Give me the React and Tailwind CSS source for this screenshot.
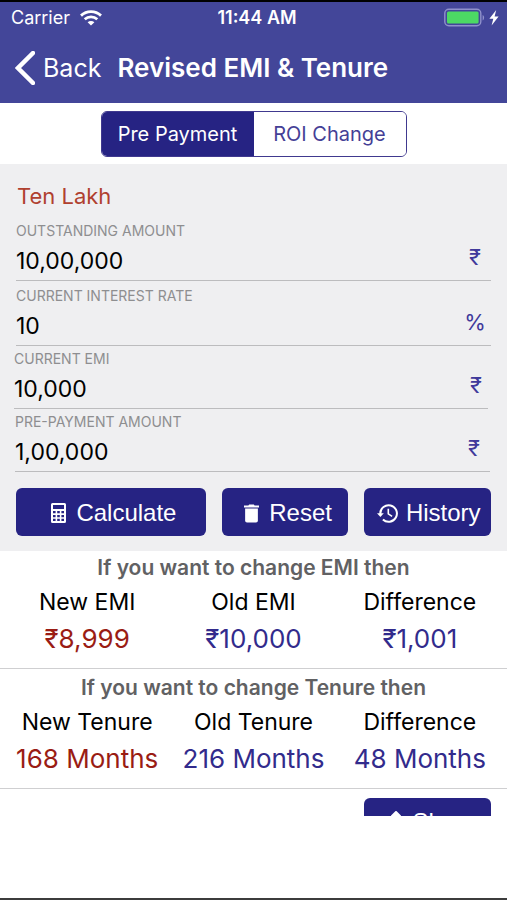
import React, { useState } from 'react';

const fields = [
  { id: 'outstanding', label: 'OUTSTANDING AMOUNT', value: '10,00,000', unit: '₹', box: 'ml-4 mr-4 h-[65px] pt-[5px]', unitBox: 'w-8' },
  { id: 'rate', label: 'CURRENT INTEREST RATE', value: '10', unit: '%', box: 'ml-4 mr-4 h-[65px] pt-[5px]', unitBox: 'w-8' },
  { id: 'emi', label: 'CURRENT EMI', value: '10,000', unit: '₹', box: 'ml-3.5 mr-[19px] h-[63px] pt-[3px]', unitBox: 'w-6' },
  { id: 'prepayment', label: 'PRE-PAYMENT AMOUNT', value: '1,00,000', unit: '₹', box: 'ml-[15px] mr-[17px] h-[63px] pt-[3px]', unitBox: 'w-8' },
];

const results = [
  {
    title: 'If you want to change EMI then',
    box: 'h-[118px] pt-[5px]',
    items: [
      { label: 'New EMI', value: '₹8,999' },
      { label: 'Old EMI', value: '₹10,000' },
      { label: 'Difference', value: '₹1,001' },
    ],
  },
  {
    title: 'If you want to change Tenure then',
    box: 'h-[120px] pt-[7px]',
    items: [
      { label: 'New Tenure', value: '168 Months' },
      { label: 'Old Tenure', value: '216 Months' },
      { label: 'Difference', value: '48 Months' },
    ],
  },
];

function WifiIcon() {
  return (
    <svg className="w-[22px] h-4" viewBox="0 0 22 16" fill="none" stroke="currentColor" strokeWidth="2.8">
      <path d="M1 5.6C6.6.4 15.4.4 21 5.6" />
      <path d="M4.7 9.3c3.6-3.3 9-3.3 12.6 0" />
      <path d="M11 15.6 7.6 12.2c1.9-1.7 4.9-1.7 6.8 0z" fill="currentColor" stroke="none" />
    </svg>
  );
}

function BatteryIcon() {
  return (
    <svg className="w-[55px] h-5" viewBox="0 0 55 20">
      <rect x=".8" y="1.3" width="36" height="16.4" rx="4" fill="none" stroke="#8f91cb" strokeWidth="1.4" />
      <rect x="3" y="3.5" width="31.6" height="12" rx="1.5" fill="#4cd964" />
      <path d="M38.6 7v5.4c2-.8 2-4.6 0-5.4z" fill="#8f91cb" />
      <path d="M52.2 2 45.4 10.8h3.9L47.6 17.4 54.6 8.4h-4z" fill="#fff" />
    </svg>
  );
}

function CalculatorIcon() {
  return (
    <svg className="w-[15px] h-5" viewBox="0 0 15 20" fill="currentColor">
      <path
        fillRule="evenodd"
        d="M1.5 0h12A1.5 1.5 0 0 1 15 1.5v17a1.5 1.5 0 0 1-1.5 1.5h-12A1.5 1.5 0 0 1 0 18.5v-17A1.5 1.5 0 0 1 1.5 0zM2 2v4h11V2zM2 8v2.3h2.600V8zM6.200 8v2.300h2.600V8zM10.400 8v2.300H13V8zM2 11.900v2.300h2.600v-2.300zM6.200 11.900v2.300h2.600v-2.300zM10.400 11.900v2.300H13v-2.300zM2 15.800v2.300h2.600v-2.300zM6.200 15.800v2.300h2.600v-2.300zM10.400 15.800v2.300H13v-2.300z"
      />
    </svg>
  );
}

function TrashIcon() {
  return (
    <svg className="w-[15px] h-[19px]" viewBox="0 0 16 19" fill="currentColor">
      <path d="M5.5 0h5l.8 1H16v2.200H0V1h4.700z" />
      <path d="M1.200 4.200h13.600V17a2 2 0 0 1-2 2H3.200a2 2 0 0 1-2-2z" />
    </svg>
  );
}

function HistoryIcon() {
  return (
    <svg className="w-[21px] h-[19px]" viewBox="0 0 21 19" fill="none" stroke="currentColor" strokeWidth="2">
      <path d="M3.300 10.500V9.500a8.300 8.300 0 1 1 2.600 6" />
      <path d="M0 9.300h6.800L3.400 13z" fill="currentColor" stroke="none" />
      <path d="M11.300 4.800v5l3.800 2.600" strokeWidth="1.600" />
    </svg>
  );
}

function ShareIcon() {
  return (
    <svg className="w-4 h-[22px]" viewBox="0 0 16 22" fill="none" stroke="currentColor" strokeWidth="2">
      <path d="M8 1 4 5h8z" fill="currentColor" strokeLinejoin="round" />
      <path d="M8 4v11M4.500 9H1.500v11.500h13V9h-3" />
    </svg>
  );
}

const buttonClass =
  "flex items-center justify-center h-12 rounded-md bg-[#262383] text-white text-[24px] leading-8 font-['Liberation_Sans',sans-serif]";

function Field({ field }) {
  return (
    <div className={'flex flex-col border-b border-[#bcbcbe] ' + field.box}>
      <label htmlFor={field.id} className="text-[14px] leading-5 text-[#8e8e90]">
        {field.label}
      </label>
      <div className="flex flex-1 items-center">
        <input
          id={field.id}
          defaultValue={field.value}
          className="min-w-0 flex-1 bg-transparent text-[23px] leading-8 text-black outline-none"
        />
        <span className={'pb-2 text-center text-[22px] leading-6 text-[#40399b] ' + field.unitBox}>
          {field.unit}
        </span>
      </div>
    </div>
  );
}

function ResultSection({ section }) {
  return (
    <section className={'border-b border-[#cfcfd1] ' + section.box}>
      <h2 className="text-center text-[21px] leading-6 font-semibold text-[#616163]">{section.title}</h2>
      <div className="grid grid-cols-3 px-1 pt-1">
        {section.items.map((item, i) => (
          <div key={item.label} className="text-center whitespace-nowrap">
            <div className="text-[23px] leading-9 text-black">{item.label}</div>
            <div className={'text-[26px] leading-[38px] ' + (i === 0 ? 'text-[#9a1c14]' : 'text-[#322b8c]')}>
              {item.value}
            </div>
          </div>
        ))}
      </div>
    </section>
  );
}

export default function App() {
  const [tab, setTab] = useState('pre');

  return (
    <div className="min-h-screen border-y-2 border-t-black border-b-[#3c3c3c] bg-white font-['Inter','Noto_Sans',sans-serif]">
      <header className="h-[101px] bg-[#434699] text-white">
        <div className="grid grid-cols-3 items-center h-8 pl-[11px] pr-2">
          <div className="flex items-center gap-2.5 text-[18px] leading-6">
            Carrier <WifiIcon />
          </div>
          <div className="pl-1 text-center text-[18px] leading-6 font-semibold whitespace-nowrap">11:44 AM</div>
          <div className="flex justify-end">
            <BatteryIcon />
          </div>
        </div>
        <div className="flex items-center h-[68px] pl-[15px]">
          <button className="flex items-center gap-2 text-[25px] leading-8">
            <svg className="w-5 h-[34px]" viewBox="0 0 20 34" fill="none" stroke="currentColor" strokeWidth="4.5">
              <path d="M18 2 3 17l15 15" strokeLinecap="round" />
            </svg>
            Back
          </button>
          <h1 className="ml-4 text-[26px] leading-8 font-semibold whitespace-nowrap">Revised EMI &amp; Tenure</h1>
        </div>
      </header>

      <div className="flex justify-center h-[61px] pt-2">
        <div className="flex w-[306px] h-[46px] overflow-hidden rounded-md border border-[#40398f] text-[20px] leading-6">
          <button
            onClick={() => setTab('pre')}
            className={'flex-1 ' + (tab === 'pre' ? 'bg-[#262383] text-white' : 'bg-white text-[#453f96]')}
          >
            Pre Payment
          </button>
          <button
            onClick={() => setTab('roi')}
            className={'flex-1 ' + (tab === 'roi' ? 'bg-[#262383] text-white' : 'bg-white text-[#453f96]')}
          >
            ROI Change
          </button>
        </div>
      </div>

      <main>
        <form className="bg-[#efeff1] pt-4 pb-[15px]" onSubmit={(e) => e.preventDefault()}>
          <p className="h-9 pl-[17px] text-[22px] leading-8 text-[#b0402f]">Ten Lakh</p>
          {fields.map((field) => (
            <Field key={field.id} field={field} />
          ))}
          <div className="grid grid-cols-[3fr_2fr_2fr] gap-4 px-4 pt-4">
            <button className={buttonClass + ' gap-2.5 pl-1.5 pt-0.5'}>
              <CalculatorIcon /> Calculate
            </button>
            <button className={buttonClass + ' gap-2.5 pl-1.5 pt-0.5'}>
              <TrashIcon /> Reset
            </button>
            <button className={buttonClass + ' gap-2 pl-0.5 pt-0.5'}>
              <HistoryIcon /> History
            </button>
          </div>
        </form>

        {results.map((section) => (
          <ResultSection key={section.title} section={section} />
        ))}

        <div className="flex justify-end h-[27px] overflow-hidden px-4 pt-[9px]">
          <button className={buttonClass + ' w-[127px] shrink-0 gap-2 pl-2.5'}>
            <ShareIcon /> Share
          </button>
        </div>
      </main>
    </div>
  );
}
